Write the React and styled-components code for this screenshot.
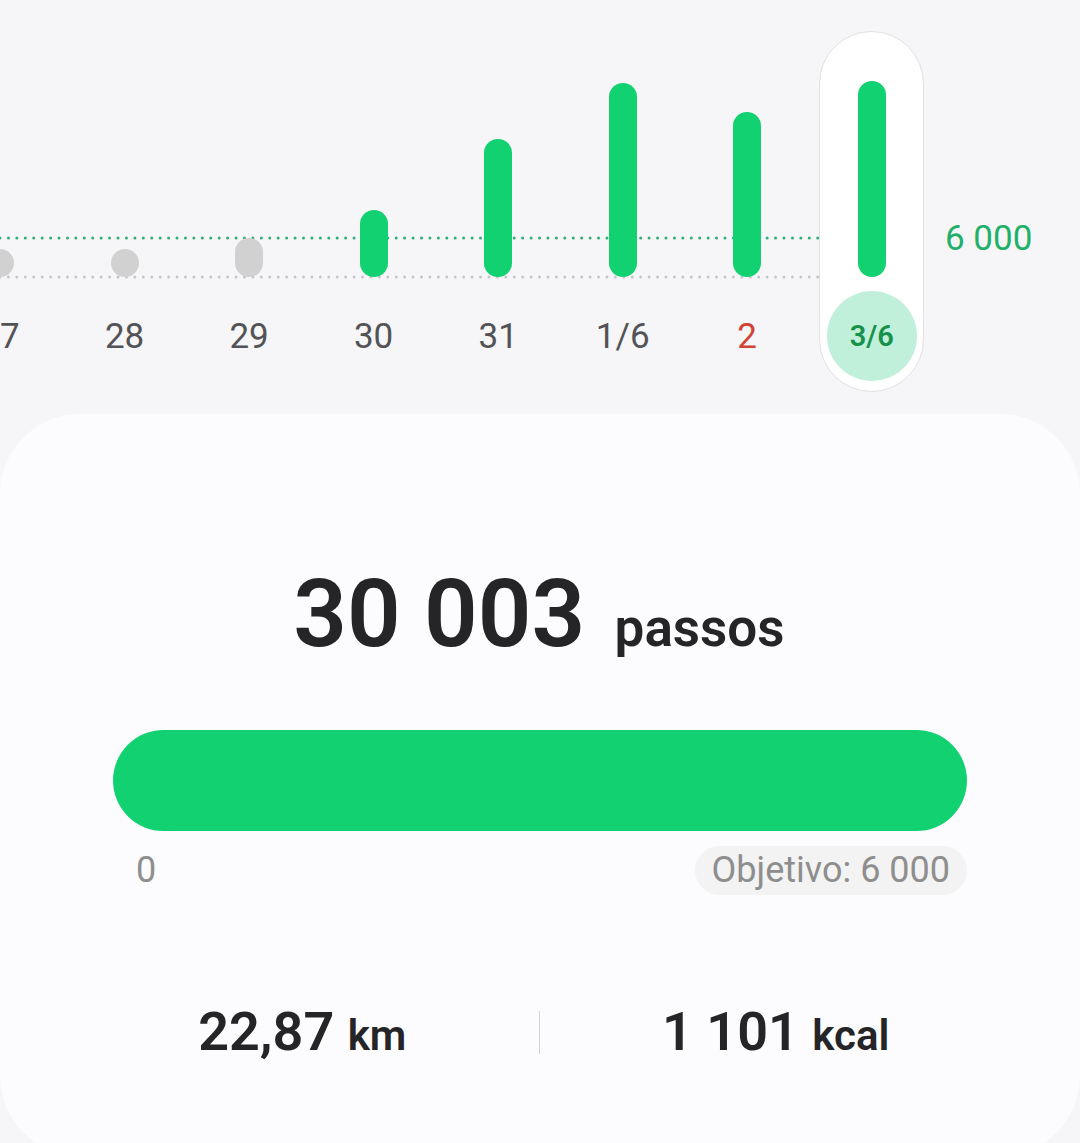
import React from 'react';
import styled, { createGlobalStyle } from 'styled-components';

const days = [
    { label: '27', height: 28 },
    { label: '28', height: 28 },
    { label: '29', height: 39 },
    { label: '30', height: 67, reached: true },
    { label: '31', height: 138, reached: true },
    { label: '1/6', height: 194, reached: true },
    { label: '2', height: 165, reached: true, holiday: true },
    { label: '3/6', height: 196, reached: true, selected: true },
];

export default function App() {
    return (
        <Page>
            <GlobalStyle />
            <History>
                <Chart>
                    <GridLines aria-hidden="true">
                        <GoalLine x1="0" x2="100%" y1="207" y2="207" />
                        <BaseLine x1="0" x2="100%" y1="246" y2="246" />
                    </GridLines>
                    {days.map((day) => (
                        <Day key={day.label}>
                            <DayButton type="button" $selected={day.selected} aria-pressed={!!day.selected}>
                                <Bar $reached={day.reached} style={{ height: day.height }} />
                                <DayLabel $selected={day.selected} $holiday={day.holiday}>
                                    {day.label}
                                </DayLabel>
                            </DayButton>
                        </Day>
                    ))}
                </Chart>
                <GoalValue>6 000</GoalValue>
            </History>
            <Card>
                <Headline>
                    30 003 <HeadlineUnit>passos</HeadlineUnit>
                </Headline>
                <Progress role="progressbar" aria-label="passos" aria-valuemin={0} aria-valuemax={6000} aria-valuenow={6000} />
                <Scale>
                    <ScaleStart>0</ScaleStart>
                    <Goal>Objetivo: 6 000</Goal>
                </Scale>
                <Stats>
                    <Stat>
                        22,87 <StatUnit>km</StatUnit>
                    </Stat>
                    <Divider />
                    <Stat>
                        1 101 <StatUnit>kcal</StatUnit>
                    </Stat>
                </Stats>
            </Card>
        </Page>
    );
}

const GlobalStyle = createGlobalStyle`
* {
    box-sizing: border-box;
}

body {
    margin: 0;
    background: #f6f6f8;
    color: #252528;
    font-family: Roboto, "Liberation Sans", sans-serif;
}
`;

const Page = styled.main`
display: flex;
flex-direction: column;
height: 100vh;
overflow: hidden;
`;

const History = styled.section`
display: flex;
flex: none;
padding-top: 31px;
`;

// Seven and a half days fit, the oldest one is cut by the left edge
const Chart = styled.div`
position: relative;
display: flex;
flex: 1;
justify-content: flex-end;
min-width: 0;
overflow: hidden;
`;

const GridLines = styled.svg`
position: absolute;
top: 0;
left: 0;
width: calc(100% - 100% / 15);
height: 100%;
`;

const GoalLine = styled.line`
stroke: #2fae78;
stroke-width: 3;
stroke-linecap: round;
stroke-dasharray: 0 8.43;
`;

const BaseLine = styled(GoalLine)`
stroke: #c6c6c8;
`;

const Day = styled.div`
position: relative;
display: flex;
flex: 0 0 calc(100% / 7.5);
justify-content: center;
`;

const DayButton = styled.button`
display: flex;
flex-direction: column;
align-items: center;
justify-content: flex-end;
gap: 14px;
width: 105px;
height: 361px;
padding: 0 0 10px;
border: 1px solid ${(props) => (props.$selected ? '#e0e0e2' : 'transparent')};
border-radius: 53px;
background: ${(props) => (props.$selected ? '#ffffff' : 'transparent')};
font: inherit;
cursor: pointer;
`;

const Bar = styled.span`
width: 28px;
border-radius: 14px;
background: ${(props) => (props.$reached ? '#12d170' : '#d1d1d1')};
`;

const DayLabel = styled.span`
display: flex;
align-items: center;
justify-content: center;
width: 90px;
height: 90px;
border-radius: 50%;
background: ${(props) => (props.$selected ? '#c0f0da' : 'transparent')};
color: ${(props) => (props.$selected ? '#17924c' : props.$holiday ? '#cf4436' : '#535357')};
font-size: ${(props) => (props.$selected ? '29px' : '35px')};
font-weight: ${(props) => (props.$selected ? 600 : 400)};
`;

const GoalValue = styled.div`
flex: none;
width: 146px;
padding: 188px 0 0 11px;
color: #1fb06a;
font-size: 35px;
line-height: 40px;
`;

const Card = styled.section`
flex: none;
margin-top: 22px;
padding: 144px 68px 94px 66px;
border-radius: 80px;
background: #fcfcfe;
`;

const Headline = styled.h1`
margin: 0;
font-size: 94px;
font-weight: 600;
line-height: 112px;
text-align: center;
white-space: nowrap;
`;

const HeadlineUnit = styled.span`
margin-left: 6px;
font-size: 53px;
line-height: 60px;
`;

const Progress = styled.div`
height: 101px;
margin: 60px 45px 0 47px;
border-radius: 51px;
background: #12d170;
`;

const Scale = styled.div`
display: flex;
align-items: center;
justify-content: space-between;
margin: 15px 45px 0 47px;
color: #8e8e8e;
font-size: 36px;
line-height: 49px;
`;

const ScaleStart = styled.span`
padding-left: 23px;
`;

const Goal = styled.span`
padding: 0 17px;
border-radius: 25px;
background: #f3f3f3;
`;

const Stats = styled.div`
display: flex;
align-items: center;
margin-top: 107px;
`;

const Stat = styled.div`
flex: 1;
font-size: 54px;
font-weight: 600;
line-height: 60px;
text-align: center;
white-space: nowrap;
`;

const StatUnit = styled.span`
font-size: 42px;
line-height: 48px;
`;

const Divider = styled.div`
width: 1px;
height: 43px;
background: #d4d4d6;
`;
